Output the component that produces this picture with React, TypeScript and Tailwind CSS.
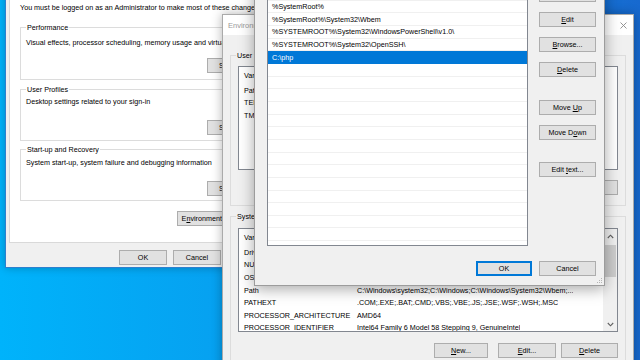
import React from 'react';

const Btn: React.FC<{ className?: string; primary?: boolean; disabled?: boolean; children: React.ReactNode }> = ({ className = '', primary, disabled, children }) => (
  <button
    className={`flex items-center justify-center h-[15px] bg-[#e1e1e1] border text-[7.2px] leading-none ${
      primary ? 'border-[#0078d7] shadow-[inset_0_0_0_1px_#0078d7]' : 'border-[#adadad]'
    } ${disabled ? 'text-[#a0a0a0]' : 'text-black'} ${className}`}
  >
    <span className="whitespace-pre">{children}</span>
  </button>
);

const U: React.FC<{ children: React.ReactNode }> = ({ children }) => (
  <span className="underline underline-offset-[1px] decoration-1">{children}</span>
);

const GroupBox: React.FC<{ label: string; className?: string; children: React.ReactNode }> = ({ label, className = '', children }) => (
  <div className={`relative border border-[#dcdcdc] ${className}`}>
    <span className="absolute -top-[5px] left-[5px] px-[1px] bg-inherit leading-[9px] whitespace-nowrap">{label}</span>
    {children}
  </div>
);

const SystemProperties: React.FC = () => (
  <div className="absolute left-[5px] top-[-40px] w-[277px] h-[308px] bg-[#f0f0f0] border border-[#2d80cf] flex flex-col shadow-[0_0_8px_rgba(0,0,0,0.25)]">
    <div className="flex-1 mx-[3px] bg-white border border-[#d9d9d9] pt-[41px] pl-[10px]">
      <p className="whitespace-nowrap leading-[9px]">
        You must be logged on as an Administrator to make most of these changes.
      </p>
      <GroupBox label="Performance" className="mt-[15px] w-[251px] h-[53px] bg-white">
        <p className="pt-[10px] pl-[5px] whitespace-nowrap">Visual effects, processor scheduling, memory usage and virtual memory</p>
        <div className="flex justify-end pr-[7px] mt-[11px]">
          <Btn className="w-[56px] h-[14px]">Settings...</Btn>
        </div>
      </GroupBox>
      <GroupBox label="User Profiles" className="mt-[9px] w-[251px] h-[52px] bg-white">
        <p className="pt-[7px] pl-[5px] whitespace-nowrap">Desktop settings related to your sign-in</p>
        <div className="flex justify-end pr-[7px] mt-[14px]">
          <Btn className="w-[56px] h-[14px]">Settings...</Btn>
        </div>
      </GroupBox>
      <GroupBox label="Start-up and Recovery" className="mt-[8px] w-[251px] h-[52px] bg-white">
        <p className="pt-[8px] pl-[5px] whitespace-nowrap">System start-up, system failure and debugging information</p>
        <div className="flex justify-end pr-[7px] mt-[14px]">
          <Btn className="w-[56px] h-[14px]">Settings...</Btn>
        </div>
      </GroupBox>
      <div className="w-[251px] flex justify-end pr-[7px] mt-[10px]">
        <Btn className="w-[87px] h-[14px]">
          E<U>n</U>vironment Variables...
        </Btn>
      </div>
    </div>
    <div className="h-[24px] flex justify-end gap-[6px] pt-[7px] pr-[6px]">
      <Btn className="w-[48px] h-[13px]">OK</Btn>
      <Btn className="w-[48px] h-[13px]">Cancel</Btn>
      <Btn className="w-[48px] h-[13px]" disabled>Apply</Btn>
    </div>
  </div>
);

type Row = [string, string];

const userVars: Row[] = [
  ['Path', 'C:\\Users\\Admin\\AppData\\Local\\Microsoft\\WindowsApps;'],
  ['TEMP', 'C:\\Users\\Admin\\AppData\\Local\\Temp'],
  ['TMP', 'C:\\Users\\Admin\\AppData\\Local\\Temp'],
];

const systemVars: Row[] = [
  ['DriverData', 'C:\\Windows\\System32\\Drivers\\DriverData'],
  ['NUMBER_OF_PROCESSORS', '4'],
  ['OS', 'Windows_NT'],
  ['Path', 'C:\\Windows\\system32;C:\\Windows;C:\\Windows\\System32\\Wbem;...'],
  ['PATHEXT', '.COM;.EXE;.BAT;.CMD;.VBS;.VBE;.JS;.JSE;.WSF;.WSH;.MSC'],
  ['PROCESSOR_ARCHITECTURE', 'AMD64'],
  ['PROCESSOR_IDENTIFIER', 'Intel64 Family 6 Model 58 Stepping 9, GenuineIntel'],
  ['PROCESSOR_LEVEL', '6'],
];

const VarList: React.FC<{ rows: Row[]; scroll?: boolean }> = ({ rows, scroll }) => (
  <div className="w-[380px] h-[104px] bg-white border border-[#828790] flex overflow-hidden">
    <div className="flex-1 min-w-0 overflow-hidden">
      <div className="h-[17px] flex items-center">
        <div className="w-[113px] h-full flex items-center pl-[5px] border-r border-[#e5e5e5]">Variable</div>
        <div className="pl-[5px]">Value</div>
      </div>
      {rows.map(([k, v]) => (
        <div key={k} className="h-[12.6px] flex items-center whitespace-nowrap">
          <div className="w-[113px] pl-[5px] shrink-0">{k}</div>
          <div className="pl-[5px] overflow-hidden">{v}</div>
        </div>
      ))}
    </div>
    {scroll && (
      <div className="w-[14px] bg-[#f0f0f0] flex flex-col items-center">
        <div className="h-[14px] flex items-center justify-center">
          <svg width="7" height="5" viewBox="0 0 7 5"><path d="M0.8 4 L3.5 1.2 L6.2 4" fill="none" stroke="#606060" strokeWidth="1.1" /></svg>
        </div>
        <div className="mt-[2px] w-[12px] h-[32px] bg-[#cdcdcd]" />
        <div className="flex-1" />
        <div className="h-[14px] flex items-center justify-center">
          <svg width="7" height="5" viewBox="0 0 7 5"><path d="M0.8 1 L3.5 3.8 L6.2 1" fill="none" stroke="#606060" strokeWidth="1.1" /></svg>
        </div>
      </div>
    )}
  </div>
);

const VarButtons: React.FC<{ className?: string }> = ({ className = '' }) => (
  <div className={`flex justify-end ${className}`}>
    <Btn className="w-[54px] mr-[10px]">
      <U>N</U>ew...
    </Btn>
    <Btn className="w-[58px] mr-[5px]">
      <U>E</U>dit...
    </Btn>
    <Btn className="w-[57px]">
      <U>D</U>elete
    </Btn>
  </div>
);

const EnvironmentVariables: React.FC = () => (
  <div className="absolute left-[222px] top-[14px] w-[412px] h-[400px] bg-[#f0f0f0] border border-[#aaaaaa] shadow-[0_0_10px_rgba(0,0,0,0.3)]">
    <div className="h-[20px] bg-white flex items-center justify-between pl-[5px] pr-[6px]">
      <span className="text-[#9a9a9a] text-[7.5px]">Environment Variables</span>
      <svg width="7" height="7" viewBox="0 0 7 7">
        <path d="M0.5 0.5 L6.5 6.5 M6.5 0.5 L0.5 6.5" stroke="#8a8a8a" strokeWidth="0.9" />
      </svg>
    </div>
    <div className="px-[7px]">
      <GroupBox label="User variables for Admin" className="mt-[20px] h-[151px] bg-[#f0f0f0] pt-[10px] px-[7px]">
        <VarList rows={userVars} />
        <VarButtons className="mt-[10px]" />
      </GroupBox>
      <GroupBox label="System variables" className="mt-[10px] h-[160px] bg-[#f0f0f0] pt-[11px] px-[7px]">
        <VarList rows={systemVars} scroll />
        <VarButtons className="mt-[11px]" />
      </GroupBox>
    </div>
  </div>
);

const pathEntries = [
  '%SystemRoot%\\system32',
  '%SystemRoot%',
  '%SystemRoot%\\System32\\Wbem',
  '%SYSTEMROOT%\\System32\\WindowsPowerShell\\v1.0\\',
  '%SYSTEMROOT%\\System32\\OpenSSH\\',
  'C:\\php',
];

const EditPath: React.FC = () => (
  <div className="absolute left-[254px] top-[-26px] w-[351px] h-[312px] bg-[#f0f0f0] border border-[#9c9c9c] shadow-[0_3px_14px_rgba(0,0,0,0.35)] pt-[12px] pl-[12px] pr-[8px]">
    <div className="flex">
      <div className="w-[261px] h-[259px] bg-white border border-[#828790] overflow-hidden">
        {pathEntries.map((p, i) => (
          <div
            key={p}
            className={`h-[12.67px] flex items-center pl-[4px] whitespace-nowrap ${
              i === pathEntries.length - 1 ? 'bg-[#0078d7] text-white' : 'border-b border-[#f0f0f0]'
            }`}
          >
            {p}
          </div>
        ))}
        {Array.from({ length: 16 }).map((_, i) => (
          <div key={i} className="h-[12.67px] border-b border-[#f0f0f0]" />
        ))}
      </div>
      <div className="ml-[11px] w-[57px] flex flex-col">
        <Btn className="w-full"><U>N</U>ew</Btn>
        <Btn className="w-full mt-[10px]"><U>E</U>dit</Btn>
        <Btn className="w-full mt-[10px]"><U>B</U>rowse...</Btn>
        <Btn className="w-full mt-[10px]"><U>D</U>elete</Btn>
        <Btn className="w-full mt-[23px]">Move <U>U</U>p</Btn>
        <Btn className="w-full mt-[10px]">Move D<U>o</U>wn</Btn>
        <Btn className="w-full mt-[22px]">Edit <U>t</U>ext...</Btn>
      </div>
    </div>
    <div className="flex justify-end gap-[7px] mt-[15px]">
      <Btn className="w-[56px]" primary>OK</Btn>
      <Btn className="w-[57px]">Cancel</Btn>
    </div>
    <svg className="absolute right-[1px] bottom-[1px]" width="7" height="7" viewBox="0 0 7 7">
      <g fill="#b5b5b5">
        <rect x="5" y="1" width="1" height="1" />
        <rect x="3" y="3" width="1" height="1" />
        <rect x="5" y="3" width="1" height="1" />
        <rect x="1" y="5" width="1" height="1" />
        <rect x="3" y="5" width="1" height="1" />
        <rect x="5" y="5" width="1" height="1" />
      </g>
    </svg>
  </div>
);

export default function App() {
  return (
    <div className="relative w-[640px] h-[360px] overflow-hidden bg-[linear-gradient(90deg,#00b3fb_0%,#0a96ea_55%,#1769cf_100%)] font-['Liberation_Sans',Arial,sans-serif] text-[7.2px] leading-[9px] text-black">
      <SystemProperties />
      <EnvironmentVariables />
      <EditPath />
    </div>
  );
}
